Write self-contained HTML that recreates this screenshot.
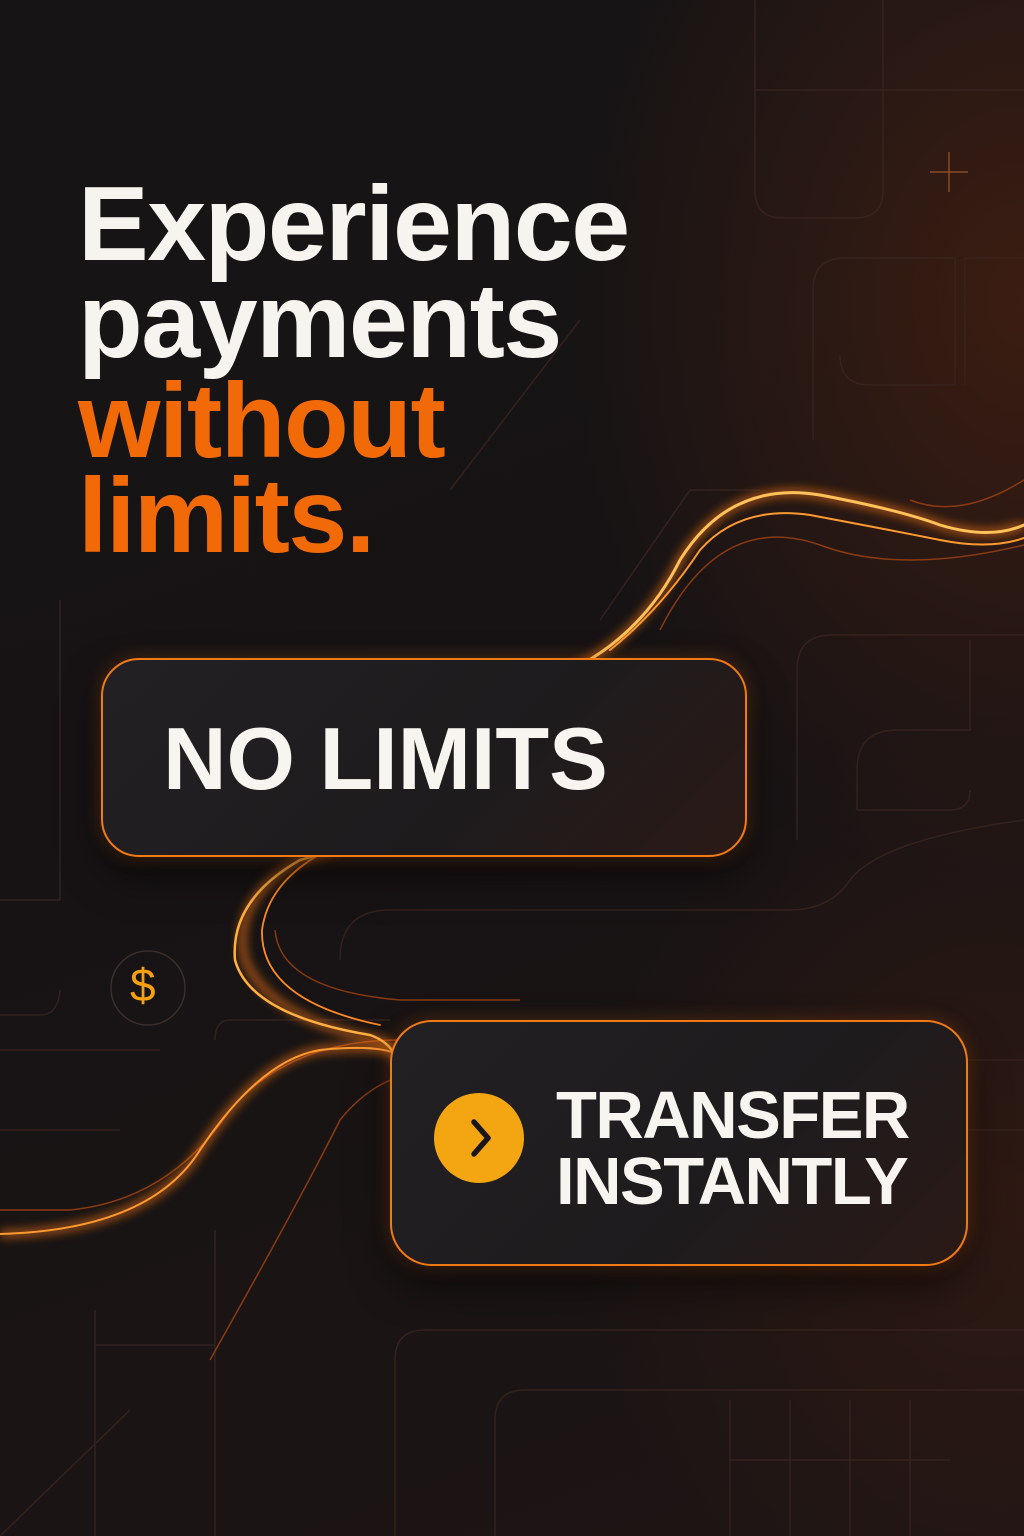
<!DOCTYPE html>
<html><head><meta charset="utf-8"><style>
html,body{margin:0;padding:0}
body{width:1024px;height:1536px;position:relative;overflow:hidden;background:#151314;font-family:"Liberation Sans",sans-serif}
.bg{position:absolute;inset:0;background:radial-gradient(ellipse 650px 850px at 1024px 300px,rgba(110,42,15,.42),transparent 70%),radial-gradient(ellipse 600px 700px at 1000px 1200px,rgba(90,35,15,.3),transparent 70%),linear-gradient(160deg,#161415 0%,#171314 50%,#1d1514 100%)}
svg{position:absolute;left:0;top:0}
.h{position:absolute;left:78px;font-size:106px;font-weight:bold;letter-spacing:-1.5px;line-height:1;white-space:nowrap}
.box{position:absolute;border:2.5px solid #f07a14;box-sizing:border-box;background:linear-gradient(135deg,#222023 0%,#1e1b1d 60%,#2b1a16 100%);box-shadow:0 0 18px rgba(240,110,20,.25),0 20px 40px rgba(0,0,0,.5)}
.t{position:absolute;color:#f8f4ef;font-weight:bold;white-space:nowrap;line-height:1}
</style></head><body>
<div class="bg"></div>
<svg width="1024" height="1536" viewBox="0 0 1024 1536">
<defs><filter id="g" x="-20%" y="-20%" width="140%" height="140%"><feGaussianBlur stdDeviation="5"/></filter></defs>
<g fill="none" stroke="#3a2520" stroke-width="1.5" opacity=".8">
<path d="M755 0 V190 Q755 218 783 218 H855 Q883 218 883 190 V0"/>
<path d="M755 90 H1024"/>
<path d="M813 440 V290 Q813 258 845 258 H955 V385 H870 Q840 385 840 355"/>
<path d="M965 385 V258 H1024"/>
<path d="M797 840 V670 Q797 635 832 635 H1024"/>
<path d="M857 810 V770 Q857 730 897 730 H970 V640"/>
<path d="M857 810 H950 Q970 810 970 790"/>
<path d="M340 960 Q340 910 390 910 H790 Q830 910 850 880 Q880 840 1024 820"/>
<path d="M390 1020 H230 Q215 1020 215 1040"/>
<path d="M0 900 H60 V600 M0 1015 H40 Q58 1015 60 990"/>
<path d="M0 1050 H160 M0 1130 H120"/>
<path d="M215 1230 V1536 M95 1310 V1536 M95 1345 H215"/>
<path d="M395 1536 V1360 Q395 1330 425 1330 H1024"/>
<path d="M495 1536 V1420 Q495 1390 525 1390 H1024"/>
<path d="M730 1400 V1536 M790 1400 V1536 M850 1400 V1536 M910 1400 V1536 M730 1460 H950"/>
<path d="M935 1060 H1024 M965 1130 H1024"/>
<path d="M450 490 L580 320 M600 620 L690 490 H760"/>
<path d="M0 1536 L130 1410"/>
</g>
<path d="M930 172 H968 M949 152 V192" stroke="#8a4a25" stroke-width="1.5"/>
<circle cx="148" cy="988" r="37" fill="none" stroke="#3a2e2d" stroke-width="1.5"/>
<g fill="none" stroke="#8a3a12" stroke-width="1.5">
<path d="M660 630 Q720 510 820 545 Q900 575 1024 545"/>
<path d="M0 1210 H70 Q170 1200 230 1110 Q290 1040 400 1040"/>
<path d="M210 1360 Q300 1200 340 1120 Q380 1070 440 1070"/>
<path d="M275 930 Q280 990 400 1000 Q470 1000 520 1000"/>
<path d="M910 500 Q960 520 1024 480"/>
</g>
<g fill="none" stroke="#ff7a15" filter="url(#g)" stroke-width="6" opacity=".8">
<path d="M560 675 Q640 640 680 560 Q730 480 820 495 Q900 510 940 525 Q990 540 1024 525"/>
<path d="M395 815 Q370 840 300 860 Q230 900 245 960 Q270 1020 380 1040 Q395 1045 395 1060"/>
<path d="M0 1234 Q150 1230 200 1150 Q260 1060 320 1050 Q370 1045 392 1052"/>
</g>
<g fill="none" stroke-linecap="round">
<path d="M560 675 Q640 640 680 560 Q730 480 820 495 Q900 510 940 525 Q990 540 1024 525" stroke="#ffc25a" stroke-width="3"/>
<path d="M610 650 Q660 610 700 550 Q740 505 810 515 Q890 530 940 540 Q990 550 1024 538" stroke="#ff9a30" stroke-width="2"/>
<path d="M390 820 Q360 845 300 860 Q230 900 235 960 Q250 1015 370 1035 Q390 1042 396 1058" stroke="#ffb040" stroke-width="2.5"/>
<path d="M355 838 Q270 870 262 930 Q260 1000 380 1025" stroke="#ff8a20" stroke-width="1.8"/>
<path d="M0 1234 Q150 1230 200 1150 Q260 1060 320 1050 Q370 1045 392 1052" stroke="#ff9a30" stroke-width="2"/>
</g>
</svg>
<div class="h" style="top:171px;color:#f7f3ee">Experience</div>
<div class="h" style="top:268px;color:#f7f3ee">payments</div>
<div class="h" style="top:368px;color:#f26a08">without</div>
<div class="h" style="top:463px;color:#f26a08">limits.</div>
<div class="box" style="left:101px;top:658px;width:646px;height:199px;border-radius:38px"></div>
<div class="t" style="left:163px;top:715px;font-size:88px;letter-spacing:0px">NO LIMITS</div>
<div class="box" style="left:390px;top:1020px;width:578px;height:246px;border-radius:42px"></div>
<div style="position:absolute;left:434px;top:1093px;width:90px;height:90px;border-radius:50%;background:#f4a612"></div>
<svg style="left:434px;top:1093px" width="90" height="90"><path d="M40 29 L54 45 L40 61" fill="none" stroke="#1a1616" stroke-width="5.5" stroke-linecap="round" stroke-linejoin="round"/></svg>
<div class="t" style="left:556px;top:1082px;font-size:67px;letter-spacing:-1.5px">TRANSFER</div>
<div class="t" style="left:556px;top:1148px;font-size:67px;letter-spacing:-1.5px">INSTANTLY</div>
<div style="position:absolute;left:130px;top:962px;font-size:46px;color:#f5a00e;line-height:1">$</div>
</body></html>
